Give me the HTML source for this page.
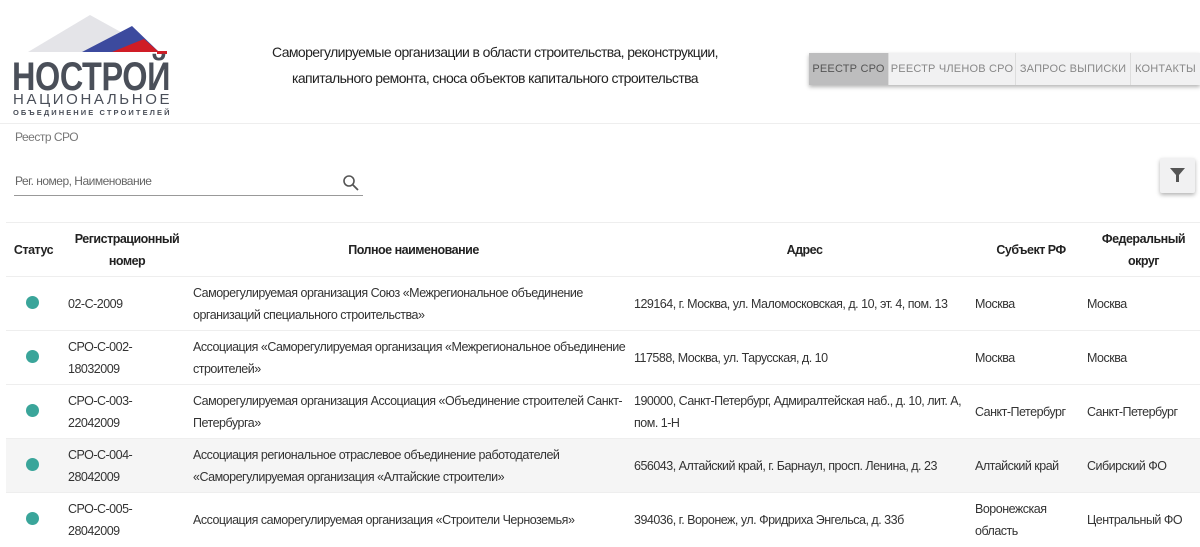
<!DOCTYPE html>
<html><head><meta charset="utf-8"><style>
*{margin:0;padding:0;box-sizing:border-box}
body{width:1200px;height:542px;overflow:hidden;background:#fff;font-family:"Liberation Sans",sans-serif;color:#333;position:relative;letter-spacing:-0.5px}
.abs{position:absolute}
.hdr{left:200px;width:590px;text-align:center;font-size:14px;line-height:26px;top:39px;color:#222;white-space:nowrap;letter-spacing:-0.6px}
.nav{top:53px;left:809px;height:32px;display:flex;box-shadow:0 2px 4px rgba(0,0,0,.3);width:391px}
.nav div{height:32px;line-height:32px;font-size:11px;color:#888;background:#f1f1f2;letter-spacing:0.2px;border-right:1px solid #ddd;white-space:nowrap;text-align:center}
.nav div.a{background:#bdbdbe;color:#555}
.line{left:0;width:1200px;height:1px;background:#eee}
table{position:absolute;left:6px;top:222px;width:1194px;border-collapse:collapse;font-size:12.5px;table-layout:fixed}
td,th{border-top:1px solid #eee;height:54px;vertical-align:middle;text-align:left;line-height:22px;padding:0;white-space:nowrap;overflow:hidden}
th{font-weight:bold;text-align:center;font-size:12.5px;color:#222}
tr.g td{background:#f5f5f5}
.dot{display:inline-block;width:13px;height:13px;border-radius:50%;background:#3aa59a;margin-left:20px;margin-top:4px}
</style></head><body>
<svg class="abs" style="left:12px;top:12px" width="160" height="105" viewBox="0 0 160 105">
<polygon points="16,40 78,3 145,40" fill="#e4e4e8"/>
<polygon points="70,40 120,14 147,40" fill="#3c4a9e"/>
<polygon points="100,40 132,27 147,40" fill="#d01d26"/>
<rect x="145" y="39" width="10" height="3" fill="#d01d26"/>
<text x="0" y="78" font-family="Liberation Sans" font-weight="bold" font-size="40" fill="#4a4f59" textLength="158" lengthAdjust="spacingAndGlyphs">НОСТРОЙ</text>
<text x="1" y="92" font-family="Liberation Sans" font-size="15" fill="#4a4f59" textLength="156" lengthAdjust="spacing">НАЦИОНАЛЬНОЕ</text>
<text x="1" y="103" font-family="Liberation Sans" font-size="7.5" font-weight="bold" fill="#4a4f59" textLength="156" lengthAdjust="spacing">ОБЪЕДИНЕНИЕ СТРОИТЕЛЕЙ</text>
</svg>
<div class="abs hdr">Саморегулируемые организации в области строительства, реконструкции,<br>капитального ремонта, сноса объектов капитального строительства</div>
<div class="abs nav"><div class="a" style="width:80px">РЕЕСТР СРО</div><div style="width:127px">РЕЕСТР ЧЛЕНОВ СРО</div><div style="width:115px">ЗАПРОС ВЫПИСКИ</div><div style="border:none;width:69px">КОНТАКТЫ</div></div>
<div class="abs line" style="top:123px"></div>
<div class="abs" style="left:15px;top:130px;font-size:12px;color:#777">Реестр СРО</div>
<div class="abs" style="left:15px;top:174px;font-size:12px;color:#666">Рег. номер, Наименование</div>
<svg class="abs" style="left:342px;top:174px" width="18" height="18" viewBox="0 0 18 18"><circle cx="7" cy="7" r="5" fill="none" stroke="#555" stroke-width="1.6"/><line x1="11" y1="11" x2="16" y2="16" stroke="#555" stroke-width="1.8"/></svg>
<div class="abs" style="left:14px;top:195px;width:349px;height:1px;background:#999"></div>
<div class="abs" style="left:1160px;top:158px;width:35px;height:35px;background:#f1f1f2;box-shadow:0 2px 4px rgba(0,0,0,.3);border-radius:2px"></div>
<svg class="abs" style="left:1170px;top:168px" width="15" height="15" viewBox="0 0 15 15"><polygon points="0,0 15,0 9,7 9,14 6,14 6,7" fill="#555"/></svg>
<table>
<colgroup><col style="width:55px"><col style="width:132px"><col style="width:441px"><col style="width:341px"><col style="width:112px"><col></colgroup>
<tr><th>Статус</th><th>Регистрационный<br>номер</th><th>Полное наименование</th><th>Адрес</th><th>Субъект РФ</th><th>Федеральный<br>округ</th></tr>
<tr><td><span class="dot"></span></td><td style="padding-left:7px">02-С-2009</td><td>Саморегулируемая организация Союз «Межрегиональное объединение<br>организаций специального строительства»</td><td>129164, г. Москва, ул. Маломосковская, д. 10, эт. 4, пом. 13</td><td>Москва</td><td>Москва</td></tr>
<tr><td><span class="dot"></span></td><td style="padding-left:7px">СРО-С-002-<br>18032009</td><td>Ассоциация «Саморегулируемая организация «Межрегиональное объединение<br>строителей»</td><td>117588, Москва, ул. Тарусская, д. 10</td><td>Москва</td><td>Москва</td></tr>
<tr><td><span class="dot"></span></td><td style="padding-left:7px">СРО-С-003-<br>22042009</td><td>Саморегулируемая организация Ассоциация «Объединение строителей Санкт-<br>Петербурга»</td><td>190000, Санкт-Петербург, Адмиралтейская наб., д. 10, лит. А,<br>пом. 1-Н</td><td>Санкт-Петербург</td><td>Санкт-Петербург</td></tr>
<tr class="g"><td><span class="dot"></span></td><td style="padding-left:7px">СРО-С-004-<br>28042009</td><td>Ассоциация региональное отраслевое объединение работодателей<br>«Саморегулируемая организация «Алтайские строители»</td><td>656043, Алтайский край, г. Барнаул, просп. Ленина, д. 23</td><td>Алтайский край</td><td>Сибирский ФО</td></tr>
<tr><td><span class="dot"></span></td><td style="padding-left:7px">СРО-С-005-<br>28042009</td><td>Ассоциация саморегулируемая организация «Строители Черноземья»</td><td>394036, г. Воронеж, ул. Фридриха Энгельса, д. 33б</td><td>Воронежская<br>область</td><td>Центральный ФО</td></tr>
</table>
</body></html>
